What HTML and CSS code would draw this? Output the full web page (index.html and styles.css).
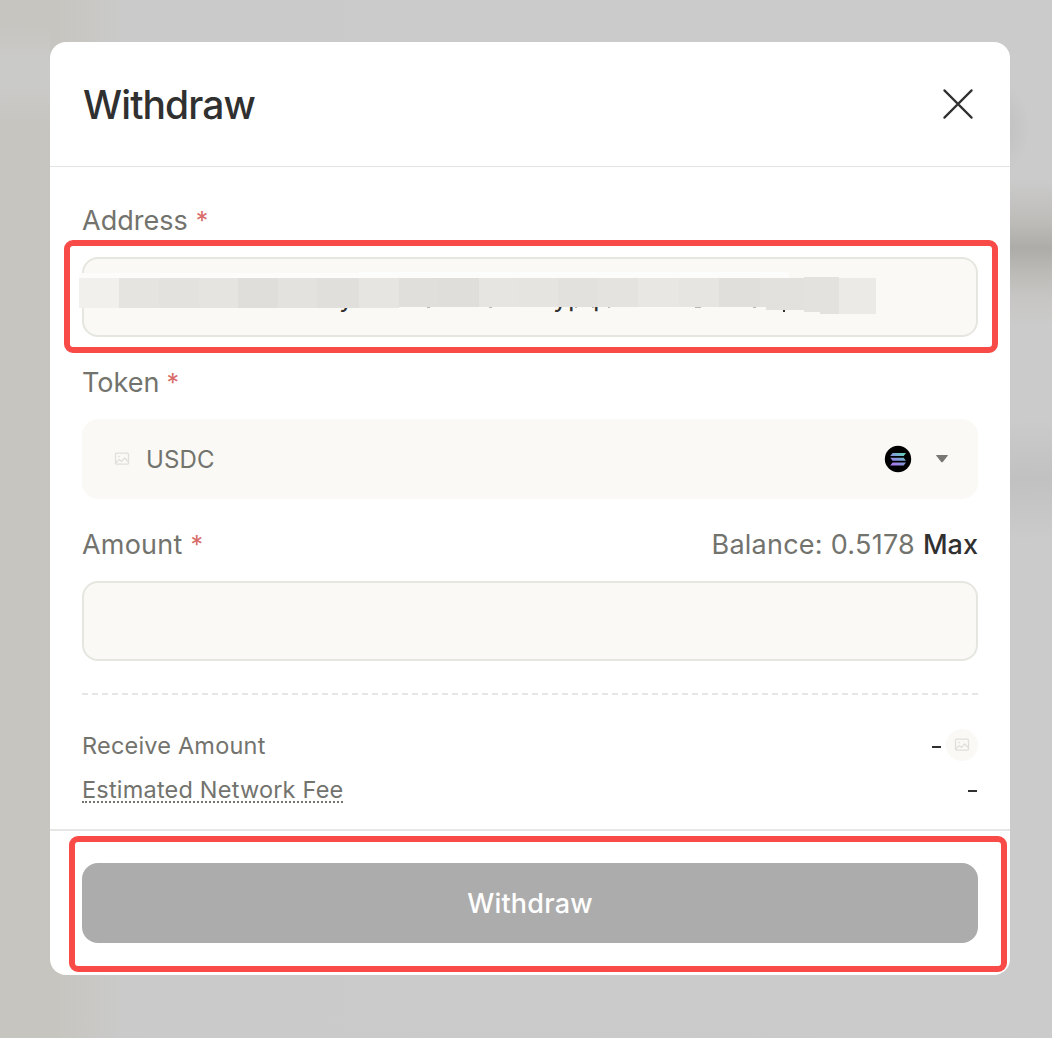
FILE: index.html
```html
<!DOCTYPE html>
<html lang="en">
<head>
<meta charset="utf-8">
<title>Withdraw</title>
<link rel="stylesheet" href="styles.css">
</head>
<body>
<main class="modal">
  <header class="header">
    <h1 class="title">Withdraw</h1>
    <svg class="close" width="32" height="32" viewBox="0 0 32 32" fill="none" stroke="#303030" stroke-width="2.2" stroke-linecap="round"><path d="M2.4 2.4 29.6 29.6M29.6 2.4 2.4 29.6"/></svg>
  </header>
  <section class="body">
    <div class="label-row"><span class="label address-label">Address</span><span class="required">*</span></div>
    <div class="field outlined address">
      <span class="glyph g1">y</span><span class="glyph g2">y</span><span class="glyph g3">p</span><span class="glyph g4">q</span>
      <svg class="mosaic" width="800" height="44" viewBox="0 0 800 44" shape-rendering="crispEdges">
        <path fill="#fcfcfa" d="M0 2h280v-1h430v6H0z"/>
        <path fill="#f1f0ed" d="M0 7h40v30H0z"/>
        <path fill="#e5e4e0" d="M40 7h40v30H40zM120 7h39v30h-39z"/>
        <path fill="#e3e2de" d="M80 7h40v30H80zM199 7h39v30h-39z"/>
        <path fill="#dfdeda" d="M159 7h40v30h-40zM359 7h41v29h-41z"/>
        <path fill="#e0dfdb" d="M238 7h42v30h-42zM320 7h39v29h-39zM640 7h41v29h-41z"/>
        <path fill="#e6e5e2" d="M280 7h40v30h-40zM400 7h40v29h-40z"/>
        <path fill="#e5e4e0" d="M440 7h39v29h-39z"/>
        <path fill="#e2e1dd" d="M479 7h40v29h-40z"/>
        <path fill="#e4e3df" d="M519 7h40v29h-40z"/>
        <path fill="#e8e7e4" d="M559 7h41v29h-41z"/>
        <path fill="#e6e5e2" d="M600 7h40v29h-40z"/>
        <path fill="#e2e1dd" d="M681 7h6v29h-6zM687 7h38v32h-38z"/>
        <path fill="#e3e2de" d="M725 6h35v37h-19v-2h-16z"/>
        <path fill="#ebeae7" d="M760 7h37v36h-37z"/>
        <path fill="#b6b6b2" d="M348 36h3v1h-3zM410 36h3v1h-3zM496 36h2v1h-2zM513 36h2v1h-2zM529 36h2v1h-2zM616 36h6v1h-6zM674 36h3v1h-3z"/>
        <path fill="#303030" d="M704 39h2v2h-2z"/>
      </svg>
      <div class="mark mark-address"></div>
    </div>
    <div class="label-row"><span class="label token-label">Token</span><span class="required">*</span></div>
    <div class="field token">
      <svg class="picture" width="16" height="14" viewBox="0 0 16 14" fill="none" stroke="#e0dfda" stroke-width="1.3"><rect x="1.5" y="1.2" width="13" height="11" rx="1.2"/><path d="m1.8 10.8 3.5-3.2 2.2 1.8L10.6 6l4 4"/><path d="M4.2 4.5h1.6"/></svg>
      <span class="symbol">USDC</span>
      <svg class="solana" width="28" height="28" viewBox="0 0 28 28"><defs><linearGradient id="sol" x1="8" y1="22" x2="20" y2="6" gradientUnits="userSpaceOnUse"><stop stop-color="#b570ee"/><stop offset=".5" stop-color="#8298d9"/><stop offset="1" stop-color="#5cdfb1"/></linearGradient></defs><circle cx="14" cy="14" r="13.2" fill="#000"/><path fill="url(#sol)" d="M8.6 7.9H22l-2.3 3.2H6.2zM6.2 12.8h13.5l2.3 3H8.6zM8.6 17.5H22l-2.3 3.1H6.2z"/></svg>
      <svg class="caret" width="14" height="10" viewBox="0 0 14 10"><path fill="#777773" d="M1.6 1h10.8q.8 0 .3.7L8 7.8q-1 1.1-2 0L1.3 1.7Q.8 1 1.6 1z"/></svg>
    </div>
    <div class="label-row"><span class="label amount-label">Amount</span><span class="required">*</span><span class="balance">Balance: 0.5178</span><span class="max">Max</span></div>
    <div class="field outlined"></div>
    <svg class="divider" width="896" height="2"><path d="M0 1h896" stroke="#e6e6e4" stroke-width="2" stroke-dasharray="6 4"/></svg>
    <div class="summary">
      <div class="summary-row"><span class="receive">Receive Amount</span><span class="value"><i class="dash"></i><span class="coin"><svg width="16" height="14" viewBox="0 0 16 14" fill="none" stroke="#e0dfda" stroke-width="1.3"><rect x="1.5" y="1.2" width="13" height="11" rx="1.2"/><path d="m1.8 10.8 3.5-3.2 2.2 1.8L10.6 6l4 4"/><path d="M4.2 4.5h1.6"/></svg></span></span></div>
      <div class="summary-row"><span class="fee">Estimated Network Fee</span><i class="dash"></i></div>
    </div>
  </section>
  <footer class="footer">
    <button class="submit">Withdraw</button>
    <div class="mark mark-submit"></div>
  </footer>
</main>
</body>
</html>
```
FILE: styles.css
```css
* { box-sizing: border-box; }
body {
  margin: 0;
  height: 1038px;
  padding: 42px 42px 0 50px;
  overflow: hidden;
  font-family: Inter, "Liberation Sans", sans-serif;
  color: #73736e;
  background:
    linear-gradient(180deg, transparent 180px, #bdbcb9 222px, #adaca8 248px, #bbbab6 272px, #c6c5c3 295px, transparent 325px) 100% 0 / 60px 400px no-repeat,
    linear-gradient(180deg, transparent 20px, #c1c1c1 78px, transparent 140px) 100% 400px / 60px 150px no-repeat,
    radial-gradient(ellipse 30px 45px at 1000px 128px, #bfbfbf, transparent),
    linear-gradient(180deg, transparent 25px, #cacac9 60px, #cacac9 85px, transparent 125px) 0 0 / 50px 140px no-repeat,
    linear-gradient(90deg, #c7c5c0 0, #c7c5bf 55px, #cacaca 120px, #cbcbcb 100%);
}
.modal {
  width: 960px;
  height: 933px;
  background: #fff;
  border-radius: 16px;
}
.header {
  height: 125px;
  padding: 0 36px 0 33px;
  display: flex;
  align-items: center;
  justify-content: space-between;
  border-bottom: 1px solid #e4e4e3;
}
.title { margin: 2px 0 0; font-size: 39px; font-weight: 500; letter-spacing: -.9px; color: #303030; line-height: 48px; }
.body { height: 662px; padding: 35px 32px 0; }
.label-row { height: 38px; margin-bottom: 17px; display: flex; align-items: center; font-size: 27px; line-height: 38px; }
.label { white-space: nowrap; }
.amount-label { letter-spacing: .2px; }
.required { margin-left: 8px; color: #d96c6a; font-size: 25px; }
.token-label + .required { margin-left: 7px; }
.balance { margin-left: auto; letter-spacing: .25px; }
.max { margin-left: 8px; color: #303030; font-weight: 500; }
.field { height: 80px; margin-bottom: 27px; border-radius: 16px; background: #faf9f5; }
.outlined { border: 2px solid #e6e6e1; }
.address { position: relative; }
.glyph { position: absolute; top: 22px; font-size: 27px; line-height: 32px; color: #303030; }
.g1 { left: 255px; }
.g2 { left: 469px; }
.g3 { left: 484px; }
.g4 { left: 499px; }
.mosaic { position: absolute; left: -5px; top: 12px; }
.mark { position: absolute; border: 6px solid #f84a46; border-radius: 9px; }
.mark-address { left: -20px; top: -19px; width: 934px; height: 113px; }
.token { display: flex; align-items: center; padding: 0 29px 0 32px; }
.symbol { margin-left: 16px; font-size: 24px; line-height: 30px; margin-top: 1px; letter-spacing: .1px; }
.solana { margin-left: auto; }
.caret { margin-left: 23px; }
.divider { display: block; margin-top: 32px; }
.summary { padding-top: 28px; font-size: 23.5px; letter-spacing: .2px; }
.summary-row { height: 44px; display: flex; align-items: center; justify-content: space-between; }
.value { display: flex; align-items: center; gap: 5px; }
.dash { display: block; width: 9px; height: 2px; background: #303030; margin-top: 3px; }
.summary-row > .dash { margin-right: 1px; }
.coin { width: 32px; height: 32px; border-radius: 50%; background: #faf9f5; display: flex; align-items: center; justify-content: center; }
.fee { height: 28px; line-height: 30px; border-bottom: 2px dotted #73736e; }
.footer { position: relative; height: 146px; border-top: 2px solid #e6e6e4; padding: 32px; }
.submit { width: 896px; height: 80px; border: 0; border-radius: 16px; background: #acacac; color: #fff; font: 500 27px/80px Inter, sans-serif; letter-spacing: .2px; padding: 1px 0 0; }
.mark-submit { left: 19px; top: 5px; width: 938px; height: 136px; }
```
